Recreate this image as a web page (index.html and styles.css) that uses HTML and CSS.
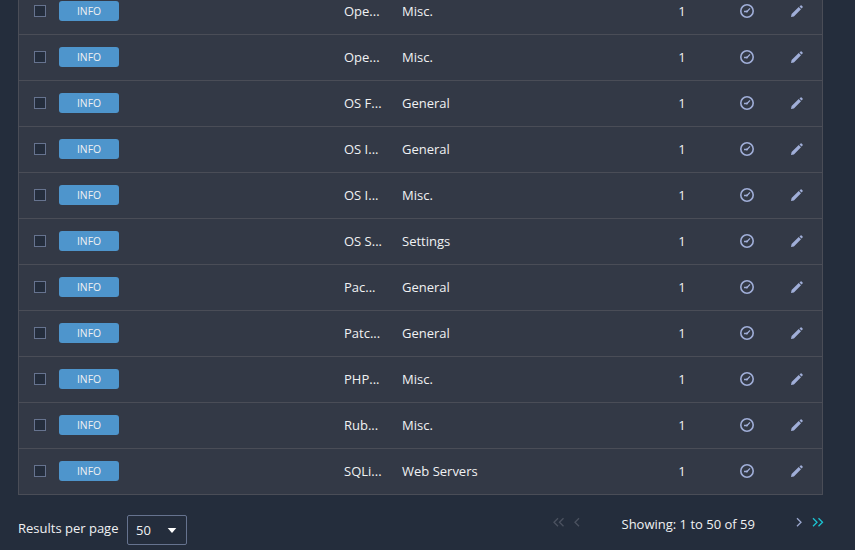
FILE: index.html
```html
<!DOCTYPE html>
<html lang="en">
<head>
<meta charset="utf-8">
<title>Vulnerabilities</title>
<link rel="stylesheet" href="styles.css">
</head>
<body>
<main class="page">
  <div class="table" id="rows"></div>
  <div class="footer">
    <span class="label">Results per page</span>
    <div class="select"><span>50</span><svg width="10" height="5" viewBox="0 0 10 5"><path d="M0.700 0h8.600L5 5z" fill="#fff"/></svg></div>
    <div class="pager">
      <svg class="first" width="12" height="10" viewBox="0 0 12 10"><path d="M5 1.200L1 5.200l4 4M10.500 1.200l-4 4 4 4"/></svg>
      <svg class="prev" width="6" height="10" viewBox="0 0 6 10"><path d="M5 1.200L1 5.200l4 4"/></svg>
      <span class="showing">Showing: 1 to 50 of 59</span>
      <svg class="next" width="6" height="10" viewBox="0 0 6 10"><path d="M1 1.200l4 4-4 4"/></svg>
      <svg class="last" width="12" height="10" viewBox="0 0 12 10"><path d="M1 1.200l4 4-4 4M6.500 1.200l4 4-4 4"/></svg>
    </div>
  </div>
</main>
<script src="rows.js"></script>
</body>
</html>
```
FILE: styles.css
```css
* { box-sizing: border-box; }
body {
  margin: 0;
  height: 550px;
  overflow: hidden;
  background: #242d3c;
  color: #f0f1f3;
  font: 13px/18px "Open Sans", sans-serif;
}
.page {
  height: 550px;
  padding: 0 32px 0 18px;
  overflow: hidden;
}
.table {
  margin-top: -12px;
  border: 1px solid #4a4d57;
  border-top: 0;
  background: #333946;
}
.row {
  display: grid;
  grid-template-columns: 40px 285px 58px 248px 64px 66px 34px 9px;
  align-items: center;
  height: 46px;
  padding-bottom: 1px;
  border-bottom: 1px solid #4a4d57;
}
.row:first-child { height: 47px; padding-bottom: 0; }
.row:last-child { border-bottom: 0; height: 45px; }
.check {
  width: 12px;
  height: 12px;
  margin-left: 15px;
  border: 1px solid #66738f;
  background: #242d3c;
}
.badge {
  width: 60px;
  height: 20px;
  border-radius: 3px;
  background: #4e95cc;
  font-size: 11.5px;
  line-height: 20px;
  text-align: center;
}
.badge span { display: block; transform: scaleX(0.9); }
.count { text-align: center; }
.row svg { display: block; margin: 0 auto; }
.footer { display: flex; height: 55px; }
.label { margin-top: 24px; width: 109px; white-space: nowrap; flex: none; }
.select {
  display: flex;
  align-items: center;
  justify-content: space-between;
  flex: none;
  width: 60px;
  height: 30px;
  margin-top: 20px;
  padding: 0 9px 0 8px;
  border: 1px solid #66738f;
  border-radius: 2px;
}
.pager {
  display: flex;
  flex: none;
  align-items: flex-start;
  margin-left: 366px;
  padding-top: 22px;
}
.pager svg { fill: none; stroke: #9ca8cf; stroke-width: 1.3; flex: none; }
.pager .first, .pager .prev { stroke: #4b5260; }
.pager .prev { margin-left: 8.5px; }
.showing { margin: -2px 0 0 42px; width: 134px; white-space: nowrap; }
.pager .next { margin-left: 40.5px; }
.pager .last { margin-left: 9.5px; stroke: #1cc5d3; }
```
FILE: rows.js
```js
const rows = [
  ["Ope...", "Misc."], ["Ope...", "Misc."], ["OS F...", "General"],
  ["OS I...", "General"], ["OS I...", "Misc."], ["OS S...", "Settings"],
  ["Pac...", "General"], ["Patc...", "General"], ["PHP...", "Misc."],
  ["Rub...", "Misc."], ["SQLi...", "Web Servers"]
];
const clock = `<svg width="14" height="14" viewBox="0 0 14 14" fill="none"><circle cx="7" cy="7" r="6.200" stroke="#a0aed8" stroke-width="1.600"/><path d="M4 7.500h3L10 4.400" stroke="#a0aed8" stroke-width="1.300"/><circle cx="6.900" cy="7.500" r="1" fill="#a0aed8"/></svg>`;
const pencil = `<svg width="12" height="12" viewBox="0 0 12 12" fill="#a0aed8"><path d="M0 12l.6-3L7.700 2l2.300 2.300L2.900 11.400zM8.500 1.500l1.100-1.100q.5-.4 1 0l1 1q.4.5 0 1l-1.100 1.100z"/></svg>`;
document.getElementById("rows").innerHTML = rows.map(([name, family]) => `
  <div class="row">
    <span class="check"></span><span class="badge"><span>INFO</span></span>
    <span>${name}</span><span>${family}</span>
    <span class="count">1</span><span>${clock}</span><span>${pencil}</span>
  </div>`).join("");
```
